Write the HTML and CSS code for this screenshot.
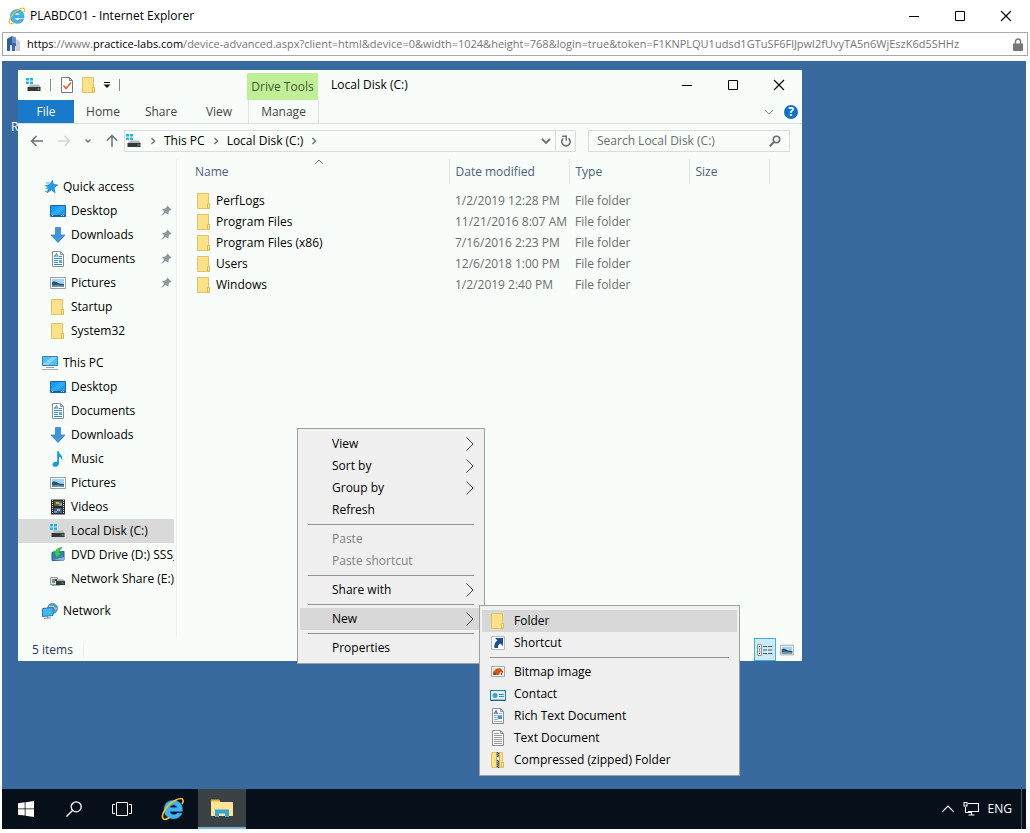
FILE: index.html
```html
<!DOCTYPE html>
<html lang="en">
<head>
<meta charset="utf-8">
<title>PLABDC01 - Internet Explorer</title>
<link rel="stylesheet" href="styles.css">
</head>
<body class="browser">

<svg class="sprite" aria-hidden="true">
  <symbol id="i-folder" viewBox="0 0 16 16">
    <path d="M1.500 .500h11v10h1v5h-12z" fill="#fbe28a" stroke="#e3c263"/>
    <path d="M11.500 15v-4.500h2V15z" fill="#fff0b0" stroke="#dfb84f"/>
  </symbol>
  <symbol id="i-drive" viewBox="0 0 16 16">
    <path d="M0 1h3v2.500H0zM4 1h3v2.500H4zM0 4.500h3V7H0zM4 4.500h3V7H4z" fill="#22b5e6"/>
    <path d="M4 7.500h9l2 3H2z" fill="#b4b8ba"/>
    <path d="M1.500 10h13v4h-13z" fill="#33383a"/>
    <path d="M11.500 11.500h2v1h-2z" fill="#4be36a"/>
  </symbol>
  <symbol id="i-netdrive" viewBox="0 0 16 16">
    <path d="M.500 6.500h7v7h-7z" fill="#e4e6e4" stroke="#999"/>
    <path d="M2 8h3v4H2z" fill="#6a9a7a"/><path d="M5 8h2v2H5z" fill="#444"/>
    <path d="M7 8h6l2 2H7z" fill="#b4b8ba"/>
    <path d="M6 10h9v4H6z" fill="#33383a"/><path d="M11.500 11.500h2v1h-2z" fill="#4be36a"/>
    <path d="M2 14h8v1H2z" fill="#aaa"/>
  </symbol>
  <symbol id="i-star" viewBox="0 0 16 16">
    <path d="M10.500 1.500l.8 4 4.400.5-3.700 2.500 1 5.200-3.800-2.900-4 3 1.300-4.600L3.700 6.500l4.100-.800z" fill="#2a9be0" stroke="#1b7fc4" stroke-width=".8"/>
    <path d="M4 4h4M2.500 6.500h3M3.500 9.500h3M3 12.500h3" stroke="#4aaee8"/>
  </symbol>
  <symbol id="i-desktop" viewBox="0 0 16 16">
    <path d="M.500 2.500h15v11H.500z" fill="#189cf0" stroke="#1766a8"/>
    <path d="M1 10L11 3h4v3L6 12H1z" fill="#45b4fb" opacity=".6"/>
    <path d="M1 12.500h14" stroke="#0d5fa5"/><path d="M2 12.500h1m8 0h1m1 0h1" stroke="#fff"/>
  </symbol>
  <symbol id="i-down" viewBox="0 0 16 16">
    <path d="M5.500 .500h5v7.500h4.500L8 15.500 1 8h4.500z" fill="#3d94dc" stroke="#2b78bc" stroke-width=".7"/>
  </symbol>
  <symbol id="i-doc" viewBox="0 0 16 16">
    <path d="M2.500 .500h8l3 3v12h-11z" fill="#fff" stroke="#8a8f8f"/>
    <path d="M10.500 .500v3h3" fill="none" stroke="#8a8f8f"/>
    <path d="M4.500 6L6.500 2.500 8 6M4 5h3M9 5.500h3M4 7.500h8M4 9.500h4M4 11.500h4M4 13.500h8" stroke="#3a8bb8" fill="none"/>
    <path d="M9 9h3v3H9z" fill="#5da9d2"/>
  </symbol>
  <symbol id="i-picture" viewBox="0 0 16 16">
    <path d="M.500 2.500h15v11H.500z" fill="#fff" stroke="#9aa0a4"/>
    <path d="M2 4h12v8H2z" fill="#a6d4f0"/><path d="M2 7c3-1 5 0 7 1.500L14 9v3H2z" fill="#2b5573"/>
    <path d="M2 10.500c4-1 8-.500 12 0V12H2z" fill="#6d98b5"/>
  </symbol>
  <symbol id="i-pc" viewBox="0 0 16 16">
    <path d="M.500 1.500h15v9H.500z" fill="#4fc0f2" stroke="#3a7fae"/>
    <path d="M1 9L10 2h5L6 10H1z" fill="#a0e0fb" opacity=".7"/>
    <path d="M4 12.500h8" stroke="#8fa5b0"/><path d="M0 14.500h16" stroke="#a5aeb2"/>
  </symbol>
  <symbol id="i-music" viewBox="0 0 16 16">
    <path d="M7.200 .200h1.600c0 2.800 4.800 4 3.300 9.500-.300-2.500-1.500-3.500-3.100-4V12.500c-.400 4-6.200 4.400-6.500 1.300C2.500 11.400 5.300 10.300 7.200 11z" fill="#159bd7"/>
  </symbol>
  <symbol id="i-video" viewBox="0 0 16 16">
    <path d="M1 .500h14v15H1z" fill="#2a2a2a"/>
    <path d="M2.500 1v14M13.500 1v14" stroke="#ddd" stroke-dasharray="1 1"/>
    <path d="M4 2h8v5H4z" fill="#556b3a"/><path d="M4 9h8v5H4z" fill="#365fae"/>
    <path d="M6 3h3v2H6zM7 10h3v2H7z" fill="#d8b43a"/><path d="M9 4h3v3H9zM4 12h3v2H4z" fill="#7b94d8"/>
  </symbol>
  <symbol id="i-dvd" viewBox="0 0 16 16">
    <path d="M2 5.500l12-1 0 8.500-12 .500z" fill="#3f7db5" stroke="#2a5f92"/>
    <path d="M3 13l11-3v3z" fill="#84b4dc"/>
    <path d="M12 .500C8.500 1 6 2.500 5.500 4.500L3.500 4l3 6.500L12 6.500 9 5.500c.500-2 1.500-3.500 3-5z" fill="#37c95c" stroke="#189a3c" stroke-width=".6"/>
  </symbol>
  <symbol id="i-network" viewBox="0 0 16 16">
    <circle cx="10.500" cy="5.500" r="5" fill="#5d9fc0" stroke="#3c7895" stroke-width=".7"/>
    <path d="M7 3c2 2 4-1 5 1s2 3 3 1" stroke="#c4e4ee" fill="none"/>
    <path d="M.500 5.500l10.500-1v8l-10.500 1z" fill="#45b6ee" stroke="#2a79ac"/>
    <path d="M2 15.500l7-.700M5.500 13v2" stroke="#6f98ae"/>
  </symbol>
  <symbol id="i-pin" viewBox="0 0 16 16">
    <path d="M9.300 2.500l4.200 4.200-1.500.600-1.300 1.500-.400 3.200L7.600 9.800 3 13.500 6.200 8.500 4 6l3.200-.500 1.500-1.400z" fill="#8b979b"/>
  </symbol>
  <symbol id="i-ie" viewBox="0 0 24 24">
    <path d="M12.300 3.300c5.300 0 9.200 3.700 9.200 9.500v1.700H8.900c.3 1.900 1.700 3 3.900 3 1.500 0 2.600-.5 3.300-1.500h5c-1.300 3.800-4.400 5.900-8.700 5.900-5.600 0-9.400-3.600-9.400-9.300 0-5.700 3.800-9.300 9.300-9.300zM9 10.600h7c-.3-1.700-1.600-2.700-3.500-2.700S9.400 8.900 9 10.600z" fill="#45b3ea" stroke="#1e86c8" stroke-width=".5"/>
    <path d="M2.500 22C-1 18.500 6 7 15 3c4-2 6.500-2 7 0 .3 1-.2 2.600-1 4M2.500 22c1.700.9 4-.1 6-1.500" fill="none" stroke="#eec02f" stroke-width="1.700"/>
  </symbol>
  <symbol id="i-chev" viewBox="0 0 8 14">
    <path d="M.500 .500L7 7 .500 13.500" fill="none" stroke="#444" stroke-width="1"/>
  </symbol>
  <symbol id="i-min" viewBox="0 0 12 12"><path d="M1 6.500h10" stroke="#000"/></symbol>
  <symbol id="i-max" viewBox="0 0 12 12"><path d="M1.500 1.500h9v9h-9z" fill="none" stroke="#000"/></symbol>
  <symbol id="i-close" viewBox="0 0 12 12"><path d="M1 1l10 10M11 1L1 11" stroke="#000" stroke-width="1.100"/></symbol>
  <symbol id="i-crumb" viewBox="0 0 6 8"><path d="M1.500 1l3 3-3 3" fill="none" stroke="#6b7071" stroke-width="1.400"/></symbol>
</svg>

<header class="titlebar">
  <svg class="icon18"><use href="#i-ie"/></svg>
  <h1 class="titlebar-text">PLABDC01 - Internet Explorer</h1>
  <div class="controls">
    <button class="control" aria-label="Minimize"><svg class="icon12"><use href="#i-min"/></svg></button>
    <button class="control" aria-label="Maximize"><svg class="icon12"><use href="#i-max"/></svg></button>
    <button class="control" aria-label="Close"><svg class="icon12"><use href="#i-close"/></svg></button>
  </div>
</header>

<div class="urlbar">
  <svg class="icon16" viewBox="0 0 16 16"><path d="M0 3l5-3v15H0z" fill="#2f5f9f"/><path d="M5 0l4 1.500v6H5z" fill="#6f8fc0"/><path d="M9 3l4 2v10H9z" fill="#c9ced6"/><path d="M5 7h4v8H5z" fill="#3a69a8"/><path d="M3 9h2v6H3zM8 10h1v5H8z" fill="#dfe6f0"/></svg>
  <div class="url"><strong class="url-strong">https</strong>://www.<strong class="url-strong">practice-labs.com</strong>/device-advanced.aspx?client=html&amp;device=0&amp;width=1024&amp;height=768&amp;login=true&amp;token=F1KNPLQU1udsd1GTuSF6FlJpwl2fUvyTA5n6WjEszK6d5SHHz</div>
  <svg class="lock" viewBox="0 0 10 13"><path d="M2.500 6V3.500a2.500 2.500 0 0 1 5 0V6" fill="none" stroke="#777" stroke-width="1.500"/><path d="M0 5.500h10V12a1 1 0 0 1-1 1H1a1 1 0 0 1-1-1z" fill="#777"/></svg>
</div>

<main class="remote">
  <div class="desktop">
    <span class="desktop-label">R</span>

    <section class="window" aria-label="Local Disk (C:)">
      <div class="win-head">
        <div class="quick-tools">
          <svg class="icon16"><use href="#i-drive"/></svg>
          <span class="tool-sep"></span>
          <button class="tool" aria-label="Properties"><svg class="icon16" viewBox="0 0 16 16"><path d="M2.500 .500h8l3 3v12h-11z" fill="#fff" stroke="#777"/><path d="M10.500 .500v3h3" fill="none" stroke="#777"/><path d="M4.500 8.500l2.500 3 5-6" fill="none" stroke="#e4622c" stroke-width="1.600"/></svg></button>
          <button class="tool" aria-label="New folder"><svg class="icon16"><use href="#i-folder"/></svg></button>
          <button class="tool" aria-label="Customize"><svg class="icon8" viewBox="0 0 8 8"><path d="M1 1.500h6" stroke="#111"/><path d="M.500 3.500h7L4 7z" fill="#111"/></svg></button>
          <span class="tool-sep"></span>
        </div>
        <div class="drive-tools">Drive Tools</div>
        <h2 class="win-title">Local Disk (C:)</h2>
        <div class="controls">
          <button class="control" aria-label="Minimize"><svg class="icon12"><use href="#i-min"/></svg></button>
          <button class="control" aria-label="Maximize"><svg class="icon12"><use href="#i-max"/></svg></button>
          <button class="control" aria-label="Close"><svg class="icon12"><use href="#i-close"/></svg></button>
        </div>
      </div>

      <div class="tabs">
        <button class="tab tab-file">File</button>
        <button class="tab">Home</button>
        <button class="tab">Share</button>
        <button class="tab">View</button>
        <button class="tab tab-manage">Manage</button>
        <div class="tabs-end">
          <svg class="icon10" viewBox="0 0 10 10"><path d="M1 3l4 4 4-4" fill="none" stroke="#888"/></svg>
          <button class="help" aria-label="Help">?</button>
        </div>
      </div>

      <div class="locate">
        <div class="history">
          <svg class="icon14" viewBox="0 0 14 14"><path d="M13 7H2M6.500 2L1.500 7l5 5" fill="none" stroke="#6b7071" stroke-width="1.500"/></svg>
          <svg class="icon14" viewBox="0 0 14 14"><path d="M1 7h11M7.500 2l5 5-5 5" fill="none" stroke="#d3d7d5" stroke-width="1.500"/></svg>
          <svg class="icon8" viewBox="0 0 8 8"><path d="M1.500 2.500L4 5l2.500-2.500" fill="none" stroke="#6b7071" stroke-width="1.500"/></svg>
          <svg class="icon14" viewBox="0 0 14 14"><path d="M7 13V2M2 6.500l5-5 5 5" fill="none" stroke="#6b7071" stroke-width="1.500"/></svg>
        </div>
        <div class="path">
          <svg class="icon16"><use href="#i-drive"/></svg>
          <svg class="crumb-arrow"><use href="#i-crumb"/></svg>
          <button class="crumb">This PC</button>
          <svg class="crumb-arrow"><use href="#i-crumb"/></svg>
          <button class="crumb">Local Disk (C:)</button>
          <svg class="crumb-arrow"><use href="#i-crumb"/></svg>
          <div class="path-end">
            <button aria-label="Previous locations"><svg class="icon10" viewBox="0 0 10 10"><path d="M1 3l4 4 4-4" fill="none" stroke="#6b7071" stroke-width="1.800"/></svg></button>
            <button class="refresh" aria-label="Refresh"><svg class="icon12" viewBox="0 0 12 12"><path d="M8.500 3.300A4.200 4.200 0 1 1 3.300 3.400" fill="none" stroke="#6b7071" stroke-width="1.600"/><path d="M2.200 1.300h4v4.200" fill="none" stroke="#6b7071" stroke-width="1.500"/></svg></button>
          </div>
        </div>
        <div class="search">
          <input class="search-input" type="text" placeholder="Search Local Disk (C:)" aria-label="Search Local Disk (C:)">
          <svg class="icon12" viewBox="0 0 12 12"><circle cx="7.500" cy="4.500" r="3.200" fill="none" stroke="#6b7071" stroke-width="1.600"/><path d="M5 7L.800 11.200" stroke="#6b7071" stroke-width="2"/></svg>
        </div>
      </div>

      <div class="win-body">
        <nav class="nav">
          <div class="nav-group">
            <a class="nav-item nav-top" href="#"><svg class="icon16"><use href="#i-star"/></svg><span>Quick access</span></a>
            <a class="nav-item" href="#"><svg class="icon16"><use href="#i-desktop"/></svg><span>Desktop</span><svg class="icon16 pin"><use href="#i-pin"/></svg></a>
            <a class="nav-item" href="#"><svg class="icon16"><use href="#i-down"/></svg><span>Downloads</span><svg class="icon16 pin"><use href="#i-pin"/></svg></a>
            <a class="nav-item" href="#"><svg class="icon16"><use href="#i-doc"/></svg><span>Documents</span><svg class="icon16 pin"><use href="#i-pin"/></svg></a>
            <a class="nav-item" href="#"><svg class="icon16"><use href="#i-picture"/></svg><span>Pictures</span><svg class="icon16 pin"><use href="#i-pin"/></svg></a>
            <a class="nav-item" href="#"><svg class="icon16"><use href="#i-folder"/></svg><span>Startup</span></a>
            <a class="nav-item" href="#"><svg class="icon16"><use href="#i-folder"/></svg><span>System32</span></a>
          </div>
          <div class="nav-group">
            <a class="nav-item nav-top" href="#"><svg class="icon16"><use href="#i-pc"/></svg><span>This PC</span></a>
            <a class="nav-item" href="#"><svg class="icon16"><use href="#i-desktop"/></svg><span>Desktop</span></a>
            <a class="nav-item" href="#"><svg class="icon16"><use href="#i-doc"/></svg><span>Documents</span></a>
            <a class="nav-item" href="#"><svg class="icon16"><use href="#i-down"/></svg><span>Downloads</span></a>
            <a class="nav-item" href="#"><svg class="icon16"><use href="#i-music"/></svg><span>Music</span></a>
            <a class="nav-item" href="#"><svg class="icon16"><use href="#i-picture"/></svg><span>Pictures</span></a>
            <a class="nav-item" href="#"><svg class="icon16"><use href="#i-video"/></svg><span>Videos</span></a>
            <a class="nav-item nav-current" href="#" aria-current="page"><svg class="icon16"><use href="#i-drive"/></svg><span>Local Disk (C:)</span></a>
            <a class="nav-item" href="#"><svg class="icon16"><use href="#i-dvd"/></svg><span>DVD Drive (D:) SSS_X</span></a>
            <a class="nav-item" href="#"><svg class="icon16"><use href="#i-netdrive"/></svg><span>Network Share (E:)</span></a>
          </div>
          <div class="nav-group">
            <a class="nav-item nav-top" href="#"><svg class="icon16"><use href="#i-network"/></svg><span>Network</span></a>
          </div>
        </nav>

        <div class="files">
          <svg class="sort-mark" viewBox="0 0 10 6"><path d="M1 5l4-4 4 4" fill="none" stroke="#777"/></svg>
          <table class="file-table">
            <thead>
              <tr><th class="col-name">Name</th><th class="col-date">Date modified</th><th class="col-type">Type</th><th class="col-size">Size</th></tr>
            </thead>
            <tbody>
              <tr><td class="name"><div class="name-cell"><svg class="icon16"><use href="#i-folder"/></svg>PerfLogs</div></td><td>1/2/2019 12:28 PM</td><td>File folder</td><td></td></tr>
              <tr><td class="name"><div class="name-cell"><svg class="icon16"><use href="#i-folder"/></svg>Program Files</div></td><td>11/21/2016 8:07 AM</td><td>File folder</td><td></td></tr>
              <tr><td class="name"><div class="name-cell"><svg class="icon16"><use href="#i-folder"/></svg>Program Files (x86)</div></td><td>7/16/2016 2:23 PM</td><td>File folder</td><td></td></tr>
              <tr><td class="name"><div class="name-cell"><svg class="icon16"><use href="#i-folder"/></svg>Users</div></td><td>12/6/2018 1:00 PM</td><td>File folder</td><td></td></tr>
              <tr><td class="name"><div class="name-cell"><svg class="icon16"><use href="#i-folder"/></svg>Windows</div></td><td>1/2/2019 2:40 PM</td><td>File folder</td><td></td></tr>
            </tbody>
          </table>
        </div>
      </div>

      <footer class="status">
        <span class="status-count">5 items</span>
        <div class="views">
          <button class="view-btn view-on" aria-label="Details"><svg class="icon16" viewBox="0 0 16 16"><path d="M.500 2.500h4v11h-4zM.500 6.200h4M.500 9.800h4" fill="#fff" stroke="#8a9a9e"/><path d="M2 4.500h1M2 8h1M2 11.500h1" stroke="#222"/><path d="M6 4.500h4m1 0h4M6 8h4m1 0h4M6 11.500h4m1 0h4" stroke="#4a5a60"/></svg></button>
          <button class="view-btn" aria-label="Large icons"><svg class="icon14" viewBox="0 0 16 16"><use href="#i-picture"/></svg></button>
        </div>
      </footer>
    </section>

    <div class="menu menu-main" role="menu">
      <button class="item" role="menuitem">View<svg class="chev"><use href="#i-chev"/></svg></button>
      <button class="item" role="menuitem">Sort by<svg class="chev"><use href="#i-chev"/></svg></button>
      <button class="item" role="menuitem">Group by<svg class="chev"><use href="#i-chev"/></svg></button>
      <button class="item" role="menuitem">Refresh</button>
      <hr class="rule">
      <button class="item" role="menuitem" disabled>Paste</button>
      <button class="item" role="menuitem" disabled>Paste shortcut</button>
      <hr class="rule">
      <button class="item" role="menuitem">Share with<svg class="chev"><use href="#i-chev"/></svg></button>
      <hr class="rule">
      <button class="item item-on" role="menuitem">New<svg class="chev"><use href="#i-chev"/></svg></button>
      <hr class="rule">
      <button class="item" role="menuitem">Properties</button>
    </div>

    <div class="menu menu-new" role="menu">
      <button class="item item-on" role="menuitem"><svg class="icon16"><use href="#i-folder"/></svg>Folder</button>
      <button class="item" role="menuitem"><svg class="icon16" viewBox="0 0 16 16"><path d="M1.500 1.500h13v13h-13z" fill="#fff" stroke="#b5bcc4"/><path d="M5 3h8v8l-2.500-2.500C8.500 9 8 10.500 8 13H4.500C4 10 4.500 7.500 7.500 5.500z" fill="#1f4f8a"/></svg>Shortcut</button>
      <hr class="rule">
      <button class="item" role="menuitem"><svg class="icon16" viewBox="0 0 16 16"><path d="M1.500 2.500h13v10h-13z" fill="#fff" stroke="#a5a9a9"/><path d="M3 4h10v7H3z" fill="#f0d8b8"/><path d="M3 8l3-3 4-1 3 3v2l-3-1-1 3H3z" fill="#c65a22"/><path d="M4 9h2v2H4zM11 9h1v2h-1z" fill="#6f4a35"/></svg>Bitmap image</button>
      <button class="item" role="menuitem"><svg class="icon16" viewBox="0 0 16 16"><path d="M.500 4.500h15v10H.500z" fill="#d8f1fb" stroke="#1f7fa8"/><path d="M1 14.200h14" stroke="#12587a"/><circle cx="5" cy="9.500" r="2.500" fill="#5b98b4"/><path d="M9 8.500h5M9 10.500h5" stroke="#4f8da8"/></svg>Contact</button>
      <button class="item" role="menuitem"><svg class="icon16" viewBox="0 0 16 16"><path d="M2.500 .500h8l3 3v12h-11z" fill="#fff" stroke="#8a8f8f"/><path d="M10.500 .500v3h3" fill="none" stroke="#8a8f8f"/><path d="M4 6l2-3.500L7.500 6M4.500 5h3" stroke="#4b58b5" fill="none"/><path d="M9 5.500h3M4 7.500h8M4 9.500h4M4 11.500h4M4 13.500h8" stroke="#8eb3d0"/><path d="M8 8h4v3H8z" fill="#3f92cf"/></svg>Rich Text Document</button>
      <button class="item" role="menuitem"><svg class="icon16" viewBox="0 0 16 16"><path d="M2.500 .500h8l3 3v12h-11z" fill="#fff" stroke="#8a8f8f"/><path d="M10.500 .500v3h3" fill="none" stroke="#8a8f8f"/><path d="M4 3.500h5M4 5.500h8M4 7.500h8M4 9.500h8M4 11.500h8M4 13.500h8" stroke="#999"/></svg>Text Document</button>
      <button class="item" role="menuitem"><svg class="icon16" viewBox="0 0 16 16"><use href="#i-folder"/><path d="M8 0v16" stroke="#b5aa7c" stroke-width="4"/><path d="M7.500 0v16" stroke="#444" stroke-dasharray="1 1"/><path d="M8.500 1v15" stroke="#444" stroke-dasharray="1 1"/><path d="M7 5h2v3H7z" fill="#eee"/></svg>Compressed (zipped) Folder</button>
    </div>
  </div>

  <footer class="taskbar">
    <button class="task" aria-label="Start"><svg class="icon16" viewBox="0 0 16 16"><path d="M0 2.300L6.700 1.300V7.500H0zM7.500 1.200L16 0v7.500H7.500zM0 8.300h6.700v6.300L0 13.700zM7.500 8.300H16V16l-8.500-1.200z" fill="#fff"/></svg></button>
    <button class="task" aria-label="Search"><svg class="icon16" viewBox="0 0 16 16"><circle cx="10.200" cy="5.800" r="5" fill="none" stroke="#fff" stroke-width="1.300"/><path d="M6.500 9.500L.500 15.500" stroke="#fff" stroke-width="1.400"/></svg></button>
    <button class="task" aria-label="Task View"><svg class="icon20" viewBox="0 0 20 20"><path d="M4.500 3.500h11v13h-11zM3 5.500H.500v9H3M17 5.500h2.500v9H17" fill="none" stroke="#fff"/></svg></button>
    <button class="task task-ie" aria-label="Internet Explorer"><svg class="icon24"><use href="#i-ie"/></svg></button>
    <button class="task task-on" aria-label="File Explorer"><svg class="icon24" viewBox="0 0 24 24"><path d="M1 4h8l1.500 2H23v14H1z" fill="#fbe39a"/><path d="M1 3.500h8l1 2H1z" fill="#e8b13c"/><path d="M5 21v-7.500h14V21h-4v-3.500H9V21z" fill="#35a5cf"/></svg></button>
    <div class="tray">
      <svg class="icon12" viewBox="0 0 12 12"><path d="M0 9l6-6 6 6" fill="none" stroke="#fff" stroke-width="1.200"/></svg>
      <svg class="icon16" viewBox="0 0 16 16"><path d="M5 2.500h10.500v8H5M2.500 6v5.500M1 2.500v-1h3v3.500H1zM2.500 11.500H9M8.500 11v2.500M5.500 14h6" fill="none" stroke="#fff" stroke-width="1.100"/></svg>
      <span>ENG</span>
      <span class="show-desktop"></span>
    </div>
  </footer>
</main>
</body>
</html>
```
FILE: styles.css
```css
* { box-sizing: border-box; }

body, button, input {
  font-family: "Open Sans", "Noto Sans", sans-serif;
  font-size: 12px;
  line-height: 16px;
}

button {
  margin: 0;
  padding: 0;
  border: 0;
  background: none;
  color: inherit;
}

svg { display: block; flex: none; }

.sprite { position: absolute; width: 0; height: 0; }
.icon8 { width: 8px; height: 8px; }
.icon10 { width: 10px; height: 10px; }
.icon12 { width: 12px; height: 12px; }
.icon14 { width: 14px; height: 14px; }
.icon16 { width: 16px; height: 16px; }
.icon18 { width: 18px; height: 18px; }
.icon20 { width: 20px; height: 20px; }
.icon24 { width: 24px; height: 24px; }

.browser {
  display: flex;
  flex-direction: column;
  min-height: 100vh;
  margin: 0;
  padding-bottom: 4px;
  background: #fff;
  color: #000;
}

/* browser frame */
.titlebar {
  display: flex;
  align-items: center;
  gap: 4px;
  height: 32px;
  padding: 0 1px 0 8px;
}
.titlebar-text { margin: 0; font-size: 12px; font-weight: 400; }
.controls { display: flex; margin-left: auto; }
.control {
  display: flex;
  align-items: center;
  justify-content: center;
  width: 46px;
  height: 30px;
}
.urlbar {
  display: flex;
  align-items: center;
  gap: 4px;
  height: 24px;
  margin: 0 2px 5px;
  padding: 0 4px;
  border: 1px solid #a9a9a9;
}
.url {
  flex: 1;
  overflow: hidden;
  color: #767676;
  font-size: 11px;
  white-space: nowrap;
}
.url-strong { color: #000; font-weight: 400; }
.lock { width: 10px; height: 13px; }

.remote {
  display: flex;
  flex: 1;
  flex-direction: column;
  margin: 0 4px 0 2px;
}
.desktop {
  position: relative;
  flex: 1;
  overflow: hidden;
  background: #386a9f;
}
.desktop-label { position: absolute; left: 9px; top: 58px; color: #fff; }

/* explorer window */
.window {
  position: absolute;
  left: 16px;
  top: 9px;
  display: flex;
  flex-direction: column;
  width: 784px;
  background: #f8fdf9;
}
.win-head { display: flex; height: 30px; }
.quick-tools {
  display: flex;
  align-items: center;
  gap: 6px;
  width: 229px;
  padding-left: 8px;
}
.tool-sep { width: 1px; height: 12px; margin: 0 2px; background: #888; }
.drive-tools {
  display: flex;
  align-items: center;
  justify-content: center;
  width: 71px;
  margin-top: 3px;
  background: #c1ef98;
  color: #3d5a2e;
}
.win-title { margin: 7px 0 0 13px; font-size: 12px; font-weight: 400; }

.tabs {
  display: flex;
  height: 24px;
  border-bottom: 1px solid #d9dfdb;
  color: #444;
}
.tab { width: 58px; }
.tab-file { width: 56px; background: #1979ca; color: #fff; }
.tab-manage { width: 71px; border: 1px solid #e0e5e1; border-width: 0 1px; }
.tabs-end {
  display: flex;
  align-items: center;
  gap: 10px;
  margin-left: auto;
  padding-right: 4px;
}
.help {
  width: 14px;
  height: 14px;
  border-radius: 7px;
  background: #0f72c8;
  color: #fff;
  font-weight: 700;
  line-height: 14px;
}

.locate { display: flex; padding: 6px 12px 7px; }
.history {
  display: flex;
  align-items: center;
  gap: 13px;
  width: 94px;
}
.path {
  display: flex;
  flex: 1;
  align-items: center;
  gap: 8px;
  height: 22px;
  padding-left: 1px;
  border: 1px solid #d9dedb;
}
.crumb-arrow { width: 6px; height: 8px; }
.path-end {
  display: flex;
  align-items: center;
  gap: 4px;
  margin-left: auto;
}
.refresh {
  display: flex;
  align-items: center;
  justify-content: center;
  width: 20px;
  height: 20px;
  border-left: 1px solid #d9dedb;
}
.search {
  display: flex;
  align-items: center;
  width: 202px;
  margin-left: 12px;
  padding: 0 8px;
  border: 1px solid #d9dedb;
}
.search-input {
  flex: 1;
  min-width: 0;
  padding: 0;
  border: 0;
  outline: 0;
  background: none;
}
.search-input::placeholder { color: #6c6f6e; opacity: 1; }

.win-body { display: flex; }
.nav {
  display: flex;
  flex-direction: column;
  gap: 8px;
  width: 159px;
  padding: 16px 2px 15px 0;
  border-right: 1px solid #eef3ef;
}
.nav-item {
  display: flex;
  align-items: center;
  gap: 5px;
  height: 24px;
  padding-left: 32px;
  overflow: hidden;
  color: #000;
  text-decoration: none;
  white-space: nowrap;
}
.nav-top { padding-left: 24px; }
.nav-current { background: #d9d9d9; }
.pin { margin-left: auto; }

.files { position: relative; flex: 1; }
.sort-mark {
  position: absolute;
  left: 137px;
  top: 0;
  width: 10px;
  height: 6px;
}
.file-table {
  table-layout: fixed;
  width: 593px;
  border-collapse: collapse;
  color: #6d6d6d;
}
.file-table th {
  height: 25px;
  padding: 0 0 0 6px;
  border-right: 1px solid #dfe5e1;
  color: #4c607a;
  font-weight: 400;
  text-align: left;
}
.file-table .col-name { width: 272px; padding-left: 18px; }
.col-date, .col-type { width: 120px; }
.file-table td { height: 21px; padding: 0 0 0 6px; white-space: nowrap; }
.file-table tbody::before { content: ""; display: block; height: 6px; }
.file-table .name { padding-left: 19px; color: #000; }
.name-cell { display: flex; align-items: center; gap: 4px; }

.status {
  display: flex;
  align-items: center;
  height: 23px;
  padding-left: 14px;
  color: #1e395b;
}
.status-count { padding-right: 10px; border-right: 1px solid #edf1ee; }
.views { display: flex; margin-left: auto; padding-right: 4px; }
.view-btn {
  display: flex;
  align-items: center;
  justify-content: center;
  width: 22px;
  height: 23px;
}
.view-on { border: 1px solid #3fb0dc; background: #cbebf7; }

/* context menus */
.menu {
  position: absolute;
  display: flex;
  flex-direction: column;
  padding: 4px 2px;
  border: 1px solid #a0a0a0;
  background: #f0f0f0;
}
.menu-main { left: 295px; top: 367px; width: 188px; }
.menu-new { left: 477px; top: 544px; width: 261px; }
.item {
  display: flex;
  align-items: center;
  height: 22px;
  text-align: left;
}
.menu-main .item { padding: 0 8px 0 32px; }
.menu-new .item { gap: 8px; padding-left: 8px; }
.item:disabled { color: #808080; }
.item-on { background: #d8d8d8; }
.chev { width: 8px; height: 14px; margin-left: auto; }
.rule {
  width: auto;
  margin: 3px 8px;
  border: 0;
  border-top: 1px solid #919191;
}

/* taskbar */
.taskbar { display: flex; height: 40px; background: #07101a; color: #fff; }
.task {
  display: flex;
  align-items: center;
  justify-content: center;
  width: 48px;
}
.task-ie { width: 52px; padding-left: 2px; }
.task-on { border-bottom: 2px solid #7db4d6; background: #3a4244; }
.tray { display: flex; align-items: center; gap: 9px; margin-left: auto; padding-right: 4px; }
.show-desktop { width: 1px; height: 40px; background: #4f575e; }
```
